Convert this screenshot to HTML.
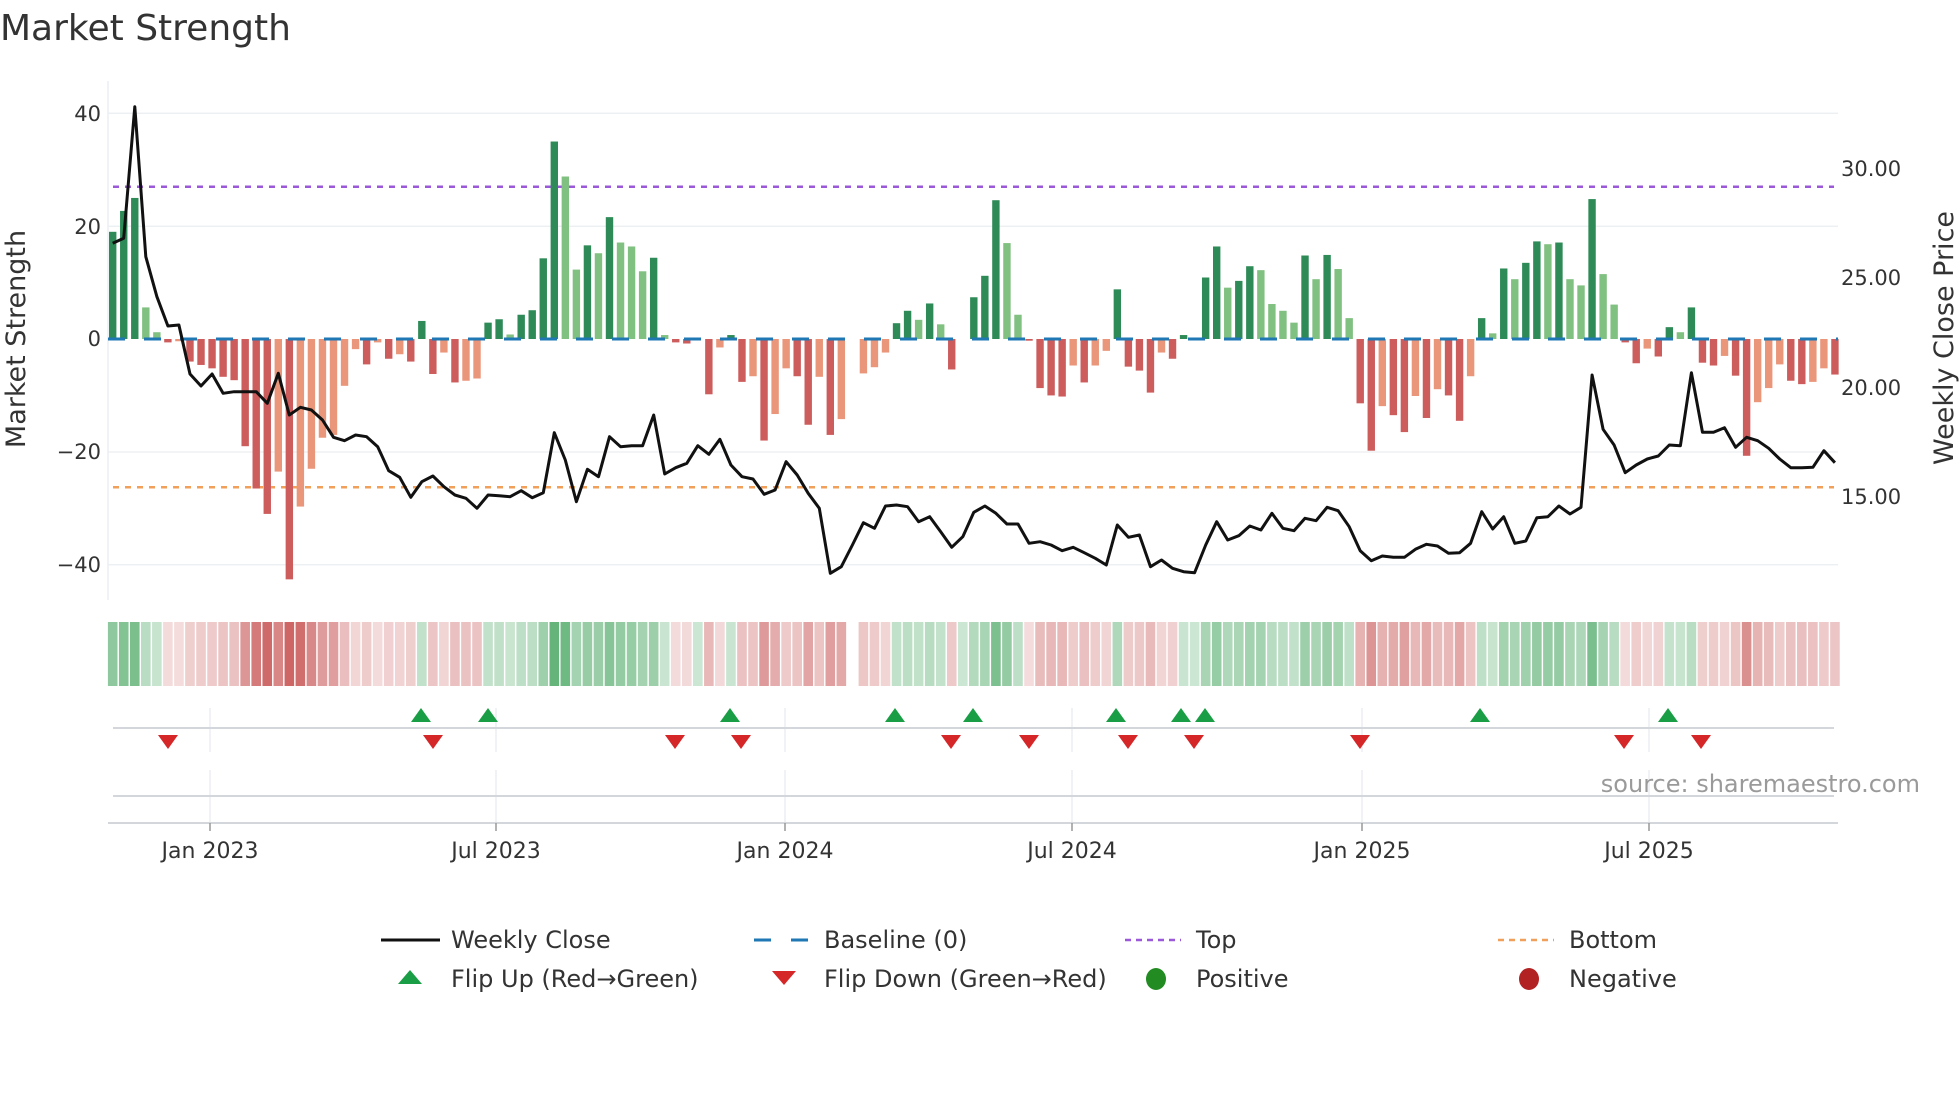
<!DOCTYPE html>
<html><head><meta charset="utf-8"><style>
html,body{margin:0;padding:0;background:#fff;width:1960px;height:1102px;overflow:hidden}
svg{display:block}
text{font-family:"DejaVu Sans","Liberation Sans",sans-serif;fill:#333}
</style></head><body>
<svg id="s" width="1960" height="1102" viewBox="0 0 1960 1102" xmlns="http://www.w3.org/2000/svg">
<text x="0" y="40" font-size="36" fill="#333">Market Strength</text>
<g stroke="#edf0f3" stroke-width="1.5">
<line x1="108" x2="1838" y1="113.3" y2="113.3"/>
<line x1="108" x2="1838" y1="226.2" y2="226.2"/>
<line x1="108" x2="1838" y1="452" y2="452"/>
<line x1="108" x2="1838" y1="564.7" y2="564.7"/>
</g>
<line x1="108" x2="108" y1="81" y2="600" stroke="#eceff2" stroke-width="1.5"/>
<g font-size="21" text-anchor="end">
<text x="101" y="121">40</text>
<text x="101" y="234">20</text>
<text x="101" y="346">0</text>
<text x="101" y="459">−20</text>
<text x="101" y="572">−40</text>
</g>
<g font-size="21">
<text x="1841" y="176">30.00</text>
<text x="1841" y="285">25.00</text>
<text x="1841" y="395">20.00</text>
<text x="1841" y="504">15.00</text>
</g>
<text transform="translate(25,339) rotate(-90)" font-size="27" text-anchor="middle">Market Strength</text>
<text transform="translate(1953,338) rotate(-90)" font-size="27" text-anchor="middle">Weekly Close Price</text>
<line x1="113" x2="1834" y1="186.7" y2="186.7" stroke="#9b59d9" stroke-width="2.5" stroke-dasharray="6,6"/>
<line x1="113" x2="1834" y1="487.3" y2="487.3" stroke="#f0a05a" stroke-width="2.5" stroke-dasharray="6,6"/>
<g id="bars"></g>
<line x1="108" x2="1838" y1="339" y2="339" stroke="#1f77b4" stroke-width="3" stroke-dasharray="17,19"/>
<polyline id="price" fill="none" stroke="#111" stroke-width="3" stroke-linejoin="round"/>
<g id="bands"></g>
<g stroke="#e6e9ee" stroke-width="1.2">
<line x1="210" x2="210" y1="708" y2="752"/><line x1="496" x2="496" y1="708" y2="752"/><line x1="785" x2="785" y1="708" y2="752"/><line x1="1072" x2="1072" y1="708" y2="752"/><line x1="1362" x2="1362" y1="708" y2="752"/><line x1="1649" x2="1649" y1="708" y2="752"/>
<line x1="210" x2="210" y1="770" y2="823"/><line x1="496" x2="496" y1="770" y2="823"/><line x1="785" x2="785" y1="770" y2="823"/><line x1="1072" x2="1072" y1="770" y2="823"/><line x1="1362" x2="1362" y1="770" y2="823"/><line x1="1649" x2="1649" y1="770" y2="823"/>
</g>
<line x1="113" x2="1834" y1="728" y2="728" stroke="#d3d6da" stroke-width="2"/>
<line x1="113" x2="1834" y1="796" y2="796" stroke="#d3d6da" stroke-width="2"/>
<line x1="108" x2="1838" y1="823" y2="823" stroke="#d3d6da" stroke-width="2"/>
<g stroke="#999" stroke-width="1.5">
<line x1="210" x2="210" y1="823" y2="831"/><line x1="496" x2="496" y1="823" y2="831"/><line x1="785" x2="785" y1="823" y2="831"/><line x1="1072" x2="1072" y1="823" y2="831"/><line x1="1362" x2="1362" y1="823" y2="831"/><line x1="1649" x2="1649" y1="823" y2="831"/>
</g>
<g id="tri"></g>
<g font-size="22" text-anchor="middle">
<text x="210" y="858">Jan 2023</text><text x="496" y="858">Jul 2023</text><text x="785" y="858">Jan 2024</text><text x="1072" y="858">Jul 2024</text><text x="1362" y="858">Jan 2025</text><text x="1649" y="858">Jul 2025</text>
</g>
<text x="1920" y="792" font-size="24" text-anchor="end" style="fill:#9a9a9a">source: sharemaestro.com</text>
<g font-size="24">
<line x1="381" x2="440" y1="940" y2="940" stroke="#111" stroke-width="3"/>
<text x="451" y="948">Weekly Close</text>
<line x1="754" x2="808" y1="940" y2="940" stroke="#1f77b4" stroke-width="3" stroke-dasharray="17,20"/>
<text x="824" y="948">Baseline (0)</text>
<line x1="1125" x2="1181" y1="940" y2="940" stroke="#9b59d9" stroke-width="2.5" stroke-dasharray="6,5"/>
<text x="1196" y="948">Top</text>
<line x1="1498" x2="1554" y1="940" y2="940" stroke="#f0a05a" stroke-width="2.5" stroke-dasharray="6,5"/>
<text x="1569" y="948">Bottom</text>
<polygon points="398,984 422,984 410,970" fill="#1a9e45"/>
<text x="451" y="987">Flip Up (Red→Green)</text>
<polygon points="772,971 796,971 784,985" fill="#d62728"/>
<text x="824" y="987">Flip Down (Green→Red)</text>
<ellipse cx="1156" cy="979" rx="10" ry="11" fill="#228b22"/>
<text x="1196" y="987">Positive</text>
<ellipse cx="1529" cy="979" rx="10" ry="11" fill="#b22222"/>
<text x="1569" y="987">Negative</text>
</g>
</svg>
<script>
var V=[[19,'d'],[22.7,'d'],[25,'d'],[5.6,'l'],[1.2,'l'],[-0.6,'r'],[-0.4,'s'],[-4,'r'],[-4.6,'r'],[-5.2,'r'],[-6.7,'r'],[-7.3,'r'],[-19,'r'],[-26.5,'r'],[-31,'r'],[-23.5,'s'],[-42.6,'r'],[-29.7,'s'],[-23,'s'],[-17.5,'s'],[-17,'s'],[-8.3,'s'],[-1.8,'s'],[-4.5,'r'],[-0.6,'s'],[-3.5,'r'],[-2.7,'s'],[-4,'r'],[3.2,'d'],[-6.2,'r'],[-2.4,'s'],[-7.7,'r'],[-7.4,'s'],[-7,'s'],[2.9,'d'],[3.5,'d'],[0.8,'l'],[4.3,'d'],[5.1,'d'],[14.3,'d'],[35,'d'],[28.8,'l'],[12.3,'l'],[16.6,'d'],[15.2,'l'],[21.6,'d'],[17.1,'l'],[16.4,'l'],[12,'l'],[14.4,'d'],[0.7,'l'],[-0.6,'r'],[-0.8,'r'],[0,'z'],[-9.8,'r'],[-1.5,'s'],[0.7,'d'],[-7.6,'r'],[-6.6,'s'],[-18,'r'],[-13.3,'s'],[-5.2,'s'],[-6.6,'r'],[-15.2,'r'],[-6.7,'s'],[-17,'r'],[-14.2,'s'],[0,'z'],[-6.1,'s'],[-5,'s'],[-2.4,'s'],[2.8,'d'],[5,'d'],[3.4,'l'],[6.3,'d'],[2.6,'l'],[-5.4,'r'],[0,'z'],[7.4,'d'],[11.2,'d'],[24.6,'d'],[17,'l'],[4.3,'l'],[-0.3,'r'],[-8.7,'r'],[-10,'r'],[-10.2,'r'],[-4.7,'s'],[-7.7,'r'],[-4.7,'s'],[-2.1,'s'],[8.8,'d'],[-4.9,'r'],[-5.6,'r'],[-9.5,'r'],[-2.4,'s'],[-3.5,'r'],[0.7,'d'],[0,'z'],[10.9,'d'],[16.4,'d'],[9.1,'l'],[10.3,'d'],[12.9,'d'],[12.2,'l'],[6.2,'l'],[5,'l'],[2.9,'l'],[14.8,'d'],[10.6,'l'],[14.9,'d'],[12.4,'l'],[3.7,'l'],[-11.4,'r'],[-19.8,'r'],[-11.9,'s'],[-13.5,'r'],[-16.5,'r'],[-10.1,'s'],[-14,'r'],[-8.9,'s'],[-10,'r'],[-14.5,'r'],[-6.6,'s'],[3.7,'d'],[1,'l'],[12.5,'d'],[10.6,'l'],[13.5,'d'],[17.3,'d'],[16.8,'l'],[17.1,'d'],[10.6,'l'],[9.5,'l'],[24.8,'d'],[11.5,'l'],[6.1,'l'],[-0.6,'r'],[-4.3,'r'],[-1.7,'s'],[-3.1,'r'],[2.1,'d'],[1.2,'l'],[5.6,'d'],[-4.2,'r'],[-4.7,'r'],[-3,'s'],[-6.5,'r'],[-20.7,'r'],[-11.2,'s'],[-8.7,'s'],[-4.5,'s'],[-7.4,'r'],[-8,'r'],[-7.6,'s'],[-5.2,'s'],[-6.3,'r']];
var P=[430,415,20,470,590,678,675,822,858,822,880,875,875,875,910,820,945,922,930,960,1012,1022,1005,1010,1040,1112,1132,1192,1145,1128,1160,1185,1195,1225,1185,1187,1190,1172,1193,1178,998,1080,1205,1108,1130,1010,1040,1037,1037,945,1122,1103,1090,1037,1063,1018,1095,1130,1137,1183,1170,1085,1125,1180,1225,1420,1400,1335,1268,1285,1218,1215,1220,1265,1250,1295,1342,1310,1237,1218,1240,1272,1272,1330,1325,1335,1352,1342,1358,1375,1395,1275,1312,1305,1400,1380,1405,1415,1418,1335,1265,1320,1307,1278,1290,1240,1285,1292,1255,1262,1222,1232,1280,1352,1382,1368,1372,1372,1348,1333,1338,1360,1358,1330,1235,1287,1250,1330,1323,1253,1250,1218,1242,1222,825,988,1035,1118,1095,1077,1068,1035,1037,818,997,997,983,1042,1012,1022,1045,1077,1103,1103,1102,1052,1088];
var C={d:'#2e8b57',l:'#80c080',r:'#cd5c5c',s:'#e9967a'};
var NS='http://www.w3.org/2000/svg';
function el(t,a,p){var e=document.createElementNS(NS,t);for(var k in a)e.setAttribute(k,a[k]);p.appendChild(e);return e;}
var bars=document.getElementById('bars'),bands=document.getElementById('bands'),pts=[];
for(var i=0;i<V.length;i++){
 var x=112.7+11.04*i,v=V[i][0],t=V[i][1];
 if(t!='z'){var y0=339,y1=339-v*5.642;el('rect',{x:x-3.7,y:Math.min(y0,y1),width:7.4,height:Math.max(Math.abs(y1-y0),1),fill:C[t]},bars);}
 if(i!=67){var a=Math.min(Math.abs(v)/32,1);var col=v>=0?'rgba(70,165,95,'+(0.28+0.55*a)+')':'rgba(200,85,85,'+(0.2+0.7*a)+')';
 el('rect',{x:x-4.8,y:622,width:9.6,height:64,fill:col},bands);}
 pts.push(x.toFixed(1)+','+(100+P[i]/3).toFixed(1));
}
document.getElementById('price').setAttribute('points',pts.join(' '));
var tri=document.getElementById('tri');
[421,488,730,895,973,1116,1181,1205,1480,1668].forEach(function(x){el('polygon',{points:(x-10)+',722 '+(x+10)+',722 '+x+',708',fill:'#1a9e45'},tri);});
[168,433,675,741,951,1029,1128,1194,1360,1624,1701].forEach(function(x){el('polygon',{points:(x-10)+',735 '+(x+10)+',735 '+x+',749',fill:'#d62728'},tri);});
</script>
</body></html>
